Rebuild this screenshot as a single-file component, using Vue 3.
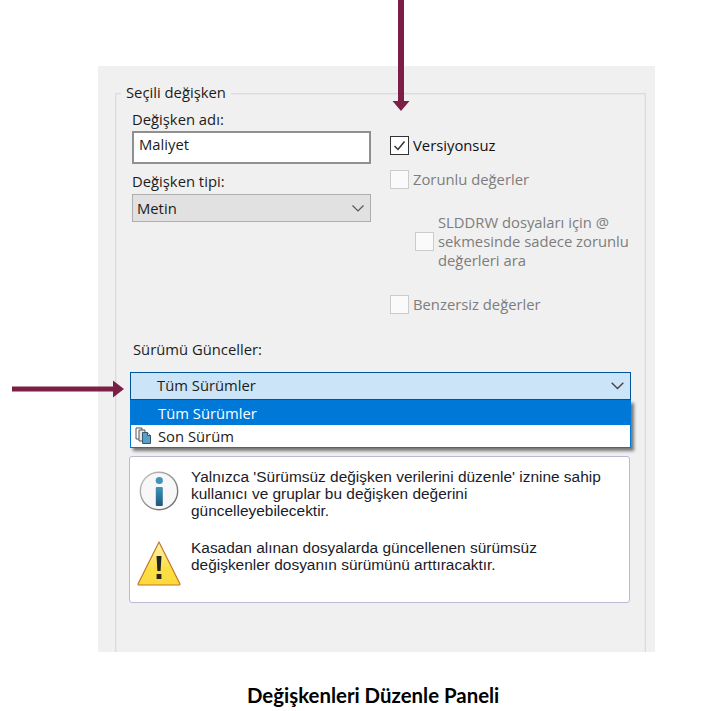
<script setup>
const infoLines = [
  "Yalnızca 'Sürümsüz değişken verilerini düzenle' iznine sahip",
  'kullanıcı ve gruplar bu değişken değerini',
  'güncelleyebilecektir.'
]
const warnLines = [
  'Kasadan alınan dosyalarda güncellenen sürümsüz',
  'değişkenler dosyanın sürümünü arttıracaktır.'
]
</script>

<template>
  <div class="page">
    <div class="panel">
      <div class="group">
        <span class="legend">Seçili değişken</span>
        <div class="columns">
          <div class="col-left">
            <div class="label">Değişken adı:</div>
            <div class="input">Maliyet</div>
            <div class="label label-type">Değişken tipi:</div>
            <div class="select">
              <span>Metin</span>
              <svg class="caret" width="12" height="7" viewBox="0 0 12 7"><path d="M0.5 0.5 L6 6 L11.5 0.5" fill="none" stroke="#555" stroke-width="1.2" /></svg>
            </div>
          </div>
          <div class="col-right">
            <div class="check-row">
              <span class="check on">
                <svg width="15" height="15" viewBox="0 0 15 15"><path d="M2.5 8 L6 11.5 L12.5 3.5" fill="none" stroke="#333" stroke-width="1.5" /></svg>
              </span>
              <span class="check-text on-text">Versiyonsuz</span>
            </div>
            <div class="check-row row-2">
              <span class="check"></span>
              <span class="check-text">Zorunlu değerler</span>
            </div>
            <div class="check-row row-3">
              <span class="check"></span>
              <span class="check-text multi">SLDDRW dosyaları için @<br />sekmesinde sadece zorunlu<br />değerleri ara</span>
            </div>
            <div class="check-row row-4">
              <span class="check"></span>
              <span class="check-text">Benzersiz değerler</span>
            </div>
          </div>
        </div>

        <div class="label label-update">Sürümü Günceller:</div>
        <div class="combo">
          <div class="combo-head">
            <span>Tüm Sürümler</span>
            <svg class="caret" width="13" height="8" viewBox="0 0 13 8"><path d="M0.7 0.7 L6.5 6.5 L12.3 0.7" fill="none" stroke="#444" stroke-width="1.4" /></svg>
          </div>
          <div class="combo-list">
            <div class="combo-item selected">Tüm Sürümler</div>
            <div class="combo-item">
              <svg class="doc-icon" width="17" height="18" viewBox="0 0 17 18">
                <path d="M1 1 H7 V12 H1 Z" fill="#fff" stroke="#555" />
                <path d="M4 3 H10 V14 H4 Z" fill="#e8e8e8" stroke="#555" />
                <path d="M7.5 5.5 H12.5 L15.5 8.5 V16.5 H7.5 Z" fill="#5b9fc4" stroke="#33566e" />
                <path d="M12.5 5.5 V8.5 H15.5" fill="#d5e8f3" stroke="#33566e" />
              </svg>
              Son Sürüm
            </div>
          </div>
        </div>

        <div class="notes">
          <div class="note">
            <svg class="note-icon info-icon" width="40" height="40" viewBox="0 0 40 40">
              <defs>
                <linearGradient id="infoRing" x1="0" y1="0" x2="1" y2="1">
                  <stop offset="0" stop-color="#c8c8c8" />
                  <stop offset="1" stop-color="#5f5f5f" />
                </linearGradient>
                <linearGradient id="infoBar" x1="0" y1="0" x2="0" y2="1">
                  <stop offset="0" stop-color="#3f93bd" />
                  <stop offset="1" stop-color="#1d5878" />
                </linearGradient>
              </defs>
              <circle cx="20" cy="20" r="19.4" fill="url(#infoRing)" />
              <circle cx="20" cy="20" r="18" fill="#f7f7f7" />
              <circle cx="20.3" cy="9.5" r="3.6" fill="#3f93bd" />
              <rect x="16.8" y="16" width="7" height="19" rx="1" fill="url(#infoBar)" />
            </svg>
            <div class="note-text">
              <div v-for="line in infoLines" :key="line">{{ line }}</div>
            </div>
          </div>
          <div class="note note-warn">
            <svg class="note-icon warn-icon" width="44" height="45" viewBox="0 0 44 45">
              <defs>
                <linearGradient id="warnFill" x1="0" y1="0" x2="0" y2="1">
                  <stop offset="0" stop-color="#fff3b0" />
                  <stop offset="0.6" stop-color="#fde047" />
                  <stop offset="1" stop-color="#fbd93a" />
                </linearGradient>
              </defs>
              <path d="M22 1 L43 43 Q43 44 42 44 H2 Q1 44 1 43 Z" fill="url(#warnFill)" stroke="#c4762a" stroke-width="1.2" stroke-linejoin="round" />
              <path d="M19.5 15 H24.5 L23.6 30 H20.4 Z" fill="#222" />
              <rect x="19.6" y="33" width="4.8" height="5" fill="#222" />
            </svg>
            <div class="note-text">
              <div v-for="line in warnLines" :key="line">{{ line }}</div>
            </div>
          </div>
        </div>
      </div>
    </div>
    <div class="caption">Değişkenleri Düzenle Paneli</div>

    <svg class="arrow arrow-down" width="18" height="111" viewBox="0 0 18 111">
      <path d="M6 0 H12 V101 H17.5 L9 111 L0.5 101 H6 Z" fill="#7b1f47" />
    </svg>
    <svg class="arrow arrow-right" width="112" height="18" viewBox="0 0 112 18">
      <path d="M0 6.5 H101 V0.5 L112 9 L101 17.5 V11.5 H0 Z" fill="#7b1f47" />
    </svg>
  </div>
</template>

<style scoped>
.page {
  position: relative;
  width: 717px;
  height: 711px;
  overflow: hidden;
  background: #fff;
  padding-top: 66px;
  box-sizing: border-box;
  font-family: "Open Sans", "Liberation Sans", sans-serif;
  font-size: 14.8px;
  color: #1c1c1c;
}

.panel {
  width: 557px;
  height: 586px;
  margin-left: 98px;
  background: #f0f0f0;
  padding: 27px 9px 0 17px;
  box-sizing: border-box;
  overflow: hidden;
}

.group {
  position: relative;
  height: 620px;
  border: 1px solid #dcdcdc;
  box-shadow: inset 0 0 0 1px #e8e8e8;
  padding: 17px 0 0 16px;
  box-sizing: border-box;
}

.legend {
  position: absolute;
  top: -12px;
  left: 5px;
  padding: 0 5px;
  background: #f0f0f0;
  line-height: 20px;
}

.columns {
  display: grid;
  grid-template-columns: 239px 1fr;
  column-gap: 19px;
  height: 203px;
}

.label {
  line-height: 16px;
  margin-bottom: 4px;
}

.input {
  height: 33px;
  padding-left: 5px;
  background: #fff;
  border: 2px solid #909090;
  box-sizing: border-box;
  line-height: 22px;
}

.label-type {
  margin-top: 9px;
  margin-bottom: 5px;
}

.select {
  display: flex;
  align-items: center;
  justify-content: space-between;
  height: 28px;
  padding: 0 6px 0 4px;
  background: #e1e1e1;
  border: 1px solid #adadad;
  box-sizing: border-box;
}

.col-right {
  padding-top: 25px;
}

.check-row {
  display: flex;
  align-items: center;
  gap: 4px;
}

.row-2 {
  margin-top: 15px;
}

.row-3 {
  margin-top: 24px;
  padding-left: 25px;
}

.row-4 {
  margin-top: 24px;
}

.row-4 .check-text {
  padding-top: 1px;
}

.check {
  display: flex;
  align-items: center;
  justify-content: center;
  flex: none;
  width: 19px;
  height: 19px;
  background: #fafafa;
  border: 1px solid #cccccc;
  box-sizing: border-box;
}

.check.on {
  background: #fff;
  border-color: #333;
}

.check-text {
  line-height: 19px;
  color: #7d7d7d;
}

.on-text {
  color: #111;
}

.label-update {
  margin: 27px 0 15px 1px;
}

.combo {
  position: relative;
  width: 501px;
  margin-left: -2px;
}

.combo-head {
  display: flex;
  align-items: center;
  justify-content: space-between;
  height: 28px;
  padding: 0 6px 2px 26px;
  background: #cce4f7;
  border: 1px solid #005499;
  box-sizing: border-box;
}

.combo-head .caret {
  margin-top: 2px;
}

.combo-list {
  position: absolute;
  top: 100%;
  left: 0;
  width: 100%;
  height: 48px;
  background: #fff;
  border: 1px solid #0078d7;
  box-sizing: border-box;
  box-shadow: 3px 3px 3px rgba(0, 0, 0, 0.5);
  z-index: 2;
}

.combo-item {
  position: relative;
  height: 23px;
  padding-left: 27px;
  line-height: 23px;
}

.combo-item.selected {
  height: 24px;
  background: #0078d7;
  color: #fff;
  line-height: 25px;
}

.doc-icon {
  position: absolute;
  left: 4px;
  top: 2px;
}

.notes {
  width: 501px;
  height: 147px;
  margin: 56px 0 0 -3px;
  padding: 12px 0 0 7px;
  background: #fff;
  border: 1px solid #b9b9d6;
  border-radius: 3px;
  box-sizing: border-box;
}

.note {
  display: grid;
  grid-template-columns: 44px 1fr;
  column-gap: 10px;
}

.note-warn {
  margin-top: 21px;
}

.note-icon {
  justify-self: center;
}

.info-icon {
  margin-top: 2px;
}

.warn-icon {
  margin-top: 1px;
}

.note-text {
  margin-top: -1px;
  font-family: "Liberation Sans", Arial, sans-serif;
  font-size: 15.45px;
  line-height: 17px;
  color: #1a1a2a;
}

.caption {
  margin-top: 32px;
  padding-left: 247px;
  font-family: "Lato", "Open Sans", sans-serif;
  font-size: 20.4px;
  font-weight: 700;
  line-height: 22px;
  color: #000;
}

.arrow {
  position: absolute;
}

.arrow-down {
  left: 392px;
  top: 0;
}

.arrow-right {
  left: 12px;
  top: 380px;
}
</style>
